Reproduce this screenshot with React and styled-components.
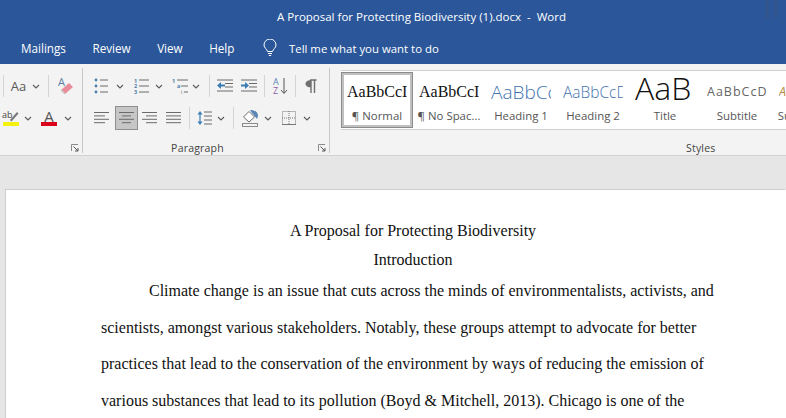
import styled, { createGlobalStyle } from "styled-components";

const GlobalStyle = createGlobalStyle`
  html, body {
    margin: 0;
    height: 100%;
    overflow: hidden;
    background: #e6e6e6;
  }
`;

const Window = styled.div`
  position: relative;
  width: 786px;
  height: 418px;
  overflow: hidden;
  display: flex;
  flex-direction: column;
  font-family: "Open Sans", "Noto Sans", sans-serif;
`;

const Header = styled.header`
  position: relative;
  background: #2b579a;
  color: #fff;
  height: 64px;
  flex: none;
`;

const TitleBar = styled.div`
  height: 32px;
  padding-left: 57px;
  display: flex;
  align-items: center;
  justify-content: center;
  font-size: 11.5px;
  white-space: pre;
`;

const Smudge = styled.div`
  position: absolute;
  top: 0;
  left: 765px;
  width: 18px;
  height: 18px;
  background: repeating-linear-gradient(
    90deg,
    rgba(60, 80, 120, 0.35) 0 4px,
    rgba(43, 87, 154, 0) 4px 9px
  );
`;

const TabBar = styled.nav`
  height: 32px;
  padding-left: 21px;
  display: flex;
  align-items: center;
  gap: 26.5px;
  font-size: 11.7px;
`;

const Tab = styled.span`
  display: block;
`;

const TellMe = styled.div`
  display: flex;
  align-items: center;
  gap: 12px;
  margin-left: 2px;
  font-size: 11.4px;
`;

const Ribbon = styled.section`
  flex: none;
  height: 92px;
  display: flex;
  background: #f3f3f3;
  border-bottom: 1px solid #d2d2d2;
  box-sizing: border-box;
`;

const FontGroup = styled.div`
  width: 83px;
  flex: none;
  display: flex;
  flex-direction: column;
  border-right: 1px solid #c8c8c8;
  margin: 4px 0 2px;
  box-sizing: border-box;
`;

const ParagraphGroup = styled(FontGroup)`
  width: 247px;
`;

const Tools = styled.div`
  flex: 1;
  padding: 6px 0 0 ${(p) => p.$pad || 0}px;
  display: flex;
  flex-direction: column;
  gap: 8px;
`;

const Row = styled.div`
  display: flex;
  height: 24px;
  align-items: stretch;
`;

const Tool = styled.div`
  width: ${(p) => p.$w}px;
  margin-left: ${(p) => p.$gap || 0}px;
  flex: none;
  display: flex;
  align-items: center;
  justify-content: center;
  box-sizing: border-box;
  background: ${(p) => (p.$active ? "#c6c6c6" : "transparent")};
  border: ${(p) => (p.$active ? "1px solid #8f8f8f" : "0")};
`;

const Divider = styled.div`
  width: 1px;
  height: 22px;
  background: #d4d4d4;
`;

const CaseLabel = styled.span`
  font-size: 13px;
  color: #5a5a5a;
`;

const GroupFooter = styled.div`
  height: 10px;
  display: flex;
  align-items: center;
  justify-content: flex-end;
  position: relative;
  padding-right: 3px;
`;

const GroupLabel = styled.span`
  position: absolute;
  left: 0;
  right: 17px;
  text-align: center;
  font-size: 10.5px;
  letter-spacing: 0.2px;
  color: #444;
`;

const StylesGroup = styled.div`
  flex: 1;
  min-width: 0;
  display: flex;
  flex-direction: column;
  padding: 6px 0 0 11px;
`;

const Gallery = styled.div`
  height: 60px;
  box-sizing: border-box;
  display: flex;
  background: #fff;
  border-top: 1px solid #d0d0d0;
  border-bottom: 1px solid #d0d0d0;
  padding-top: 1px;
  overflow: hidden;
`;

const StyleItem = styled.div`
  width: 72px;
  height: 56px;
  flex: none;
  box-sizing: border-box;
  display: flex;
  flex-direction: column;
  align-items: center;
  overflow: hidden;
  background: #fff;
  border: ${(p) => (p.$selected ? "3px solid #c0c0c0" : "3px solid transparent")};
  outline: ${(p) => (p.$selected ? "1px solid #8c8c8c" : "none")};
  outline-offset: -1px;
`;

const sampleStyles = {
  normal: `font: 16px "Liberation Serif", serif; color: #111;`,
  h1: `font: 300 19px "Open Sans", sans-serif; color: #3f74b0;`,
  h2: `font: 300 15.5px "Open Sans", sans-serif; color: #3f74b0;`,
  title: `font: 300 32px/30px "Open Sans", sans-serif; color: #111; padding-bottom: 8px;`,
  subtitle: `font: 12.5px "Open Sans", sans-serif; color: #666; letter-spacing: 1px;`,
  emphasis: `font: italic 12.5px "Open Sans", sans-serif; color: #b08a3c;`,
};

const Sample = styled.div`
  height: 33px;
  width: 60px;
  box-sizing: border-box;
  flex: none;
  display: flex;
  align-items: center;
  justify-content: flex-start;
  overflow: hidden;
  white-space: nowrap;
  ${(p) => sampleStyles[p.$kind]}
`;

const StyleName = styled.div`
  font-size: 11.4px;
  line-height: 16px;
  color: #555;
  white-space: nowrap;
`;

const StylesLabel = styled.div`
  font-size: 10.5px;
  letter-spacing: 0.2px;
  color: #444;
  margin-top: 11px;
  padding-left: 345px;
  white-space: nowrap;
`;

const Workspace = styled.main`
  flex: 1;
  min-height: 0;
  background: #e6e6e6;
  padding: 34px 0 0 6px;
  overflow: hidden;
`;

const Page = styled.article`
  height: 400px;
  background: #fff;
  box-shadow: -1px -1px 0 #cfcfcf;
  padding: 26px 61px 0 95px;
  font-family: "Liberation Serif", serif;
  font-size: 16px;
  color: #111;
`;

const Centered = styled.div`
  text-align: center;
  line-height: 29px;
  white-space: nowrap;
`;

const BodyLine = styled.div`
  line-height: 36.5px;
  white-space: nowrap;
  text-indent: ${(p) => (p.$first ? "48px" : "0")};
  margin-top: ${(p) => (p.$first ? "-1px" : "0")};
`;

const blue = "#4d7ea8";
const grey = "#6b6b6b";

function Chevron() {
  return (
    <svg width="8" height="5" viewBox="0 0 8 5">
      <path d="M1 1l3 3 3-3" fill="none" stroke="#5a5a5a" strokeWidth="1.1" />
    </svg>
  );
}

function Lines({ rows }) {
  return (
    <svg width="16" height="16" viewBox="0 0 16 16">
      {rows.map(([x1, x2], i) => (
        <path key={i} d={`M${x1} ${2.5 + i * 3.4}H${x2}`} stroke={grey} strokeWidth="1" />
      ))}
    </svg>
  );
}

function Eraser() {
  return (
    <svg width="16" height="18" viewBox="0 0 16 18">
      <text x="0" y="9" fontSize="11" fontFamily="Open Sans" fill="#5a7fa5">A</text>
      <path d="M3 13l8-7 4 4-8 7z" fill="#e88c9c" />
      <path d="M3 13l4 4" stroke="#c9c9c9" strokeWidth="1.5" />
    </svg>
  );
}

function Highlighter() {
  return (
    <svg width="18" height="18" viewBox="0 0 18 18">
      <text x="0" y="9" fontSize="9" fontFamily="Open Sans" fill="#444">ab</text>
      <path d="M8 11l7-8 1.5 1.5-7 8z" fill="#777" />
      <rect x="1" y="13" width="16" height="4" fill="#f5f10e" />
    </svg>
  );
}

function FontColor() {
  return (
    <svg width="16" height="18" viewBox="0 0 16 18">
      <text x="8" y="13" textAnchor="middle" fontSize="15" fontFamily="Open Sans" fill="#555">A</text>
      <rect x="0" y="13" width="16" height="4" fill="#d9021a" />
    </svg>
  );
}

function Bullets() {
  return (
    <svg width="15" height="16" viewBox="0 0 15 16">
      {[2, 8, 14].map((y) => (
        <g key={y}>
          <circle cx="2" cy={y} r="1.4" fill={blue} />
          <path d={`M6 ${y}H14`} stroke={grey} />
        </g>
      ))}
    </svg>
  );
}

function Numbered() {
  return (
    <svg width="15" height="16" viewBox="0 0 15 16">
      {[1, 2, 3].map((n) => (
        <g key={n}>
          <text x="0" y={n * 5.2} fontSize="5.5" fontFamily="Open Sans" fontWeight="700" fill={blue}>{n}</text>
          <path d={`M5 ${n * 6 - 4}H15`} stroke={grey} />
        </g>
      ))}
    </svg>
  );
}

function Multilevel() {
  return (
    <svg width="17" height="16" viewBox="0 0 17 16">
      <text x="0" y="5" fontSize="5.5" fontFamily="Open Sans" fontWeight="700" fill={blue}>1</text>
      <path d="M5 2H16" stroke={grey} />
      <text x="5" y="10" fontSize="5.5" fontFamily="Open Sans" fontWeight="700" fill={blue}>a</text>
      <path d="M9 8H16" stroke={grey} />
      <text x="9" y="16" fontSize="5.5" fontFamily="Open Sans" fill={grey}>i</text>
      <path d="M12 14H16" stroke={grey} />
    </svg>
  );
}

function Indent({ flip }) {
  return (
    <svg width="17" height="14" viewBox="0 0 17 14">
      <path d="M0 1H16M8 4.5H16M8 8H16M0 12H16" stroke={grey} />
      <path
        d={flip ? "M0 5.5H4V3l4 3.5L4 10V7.5H0z" : "M8 5.5H4V3L0 6.5 4 10V7.5H8z"}
        fill="#3a7cb4"
      />
    </svg>
  );
}

function Sort() {
  return (
    <svg width="15" height="18" viewBox="0 0 15 18">
      <text x="0" y="8" fontSize="9" fontFamily="Open Sans" fill="#5b87b5">A</text>
      <text x="0" y="17" fontSize="9" fontFamily="Open Sans" fill="#8a5fa8">Z</text>
      <path d="M11 1V16M8 13l3 3.5 3-3.5" fill="none" stroke="#555" />
    </svg>
  );
}

function Pilcrow() {
  return (
    <svg width="12" height="15" viewBox="0 0 12 15">
      <path d="M5 1h6.5M6 1v13M9.5 1v13" stroke="#6f6f6f" strokeWidth="1.4" fill="none" />
      <path d="M6 1.2C2 1 .5 3 .5 4.8S2 8.5 6 8.3z" fill="#6f6f6f" />
    </svg>
  );
}

function LineSpacing() {
  return (
    <svg width="15" height="16" viewBox="0 0 15 16">
      <path d="M7 2H15M7 6H15M7 10H15M7 14H15" stroke={grey} />
      <path d="M3 1L.5 4.5h5zM3 15L.5 11.5h5z" fill="#3a7cb4" />
      <path d="M3 4V12" stroke="#3a7cb4" strokeWidth="1.2" />
    </svg>
  );
}

function Shading() {
  return (
    <svg width="17" height="18" viewBox="0 0 17 18">
      <path d="M1.5 8L7 2.5 12.5 8 7 13z" fill="#fff" stroke="#6b6b6b" />
      <path d="M8 1c5 0 8 2 8 6l-1 3-2.5-3L10 4z" fill="#5b87b5" />
      <rect x="0.5" y="14.5" width="15" height="3" fill="#f3f3f3" stroke="#8b8b8b" />
    </svg>
  );
}

function Borders() {
  return (
    <svg width="14" height="14" viewBox="0 0 14 14">
      <rect x="0.5" y="0.5" width="13" height="13" fill="none" stroke="#777" strokeDasharray="1 1" />
      <path d="M7 0V14M0 7H14" stroke="#777" strokeDasharray="1 1" />
      <path d="M0 13.5H14" stroke="#777" />
    </svg>
  );
}

function Launcher() {
  return (
    <svg width="8" height="8" viewBox="0 0 8 8">
      <path d="M.5 7V.5H7" fill="none" stroke="#8a8a8a" />
      <path d="M2.5 2.5L7 7M7 4v3H4" fill="none" stroke="#555" />
    </svg>
  );
}

function Bulb() {
  return (
    <svg width="14" height="18" viewBox="0 0 14 18">
      <path
        d="M4.5 12.5C4 10 1 9 1 6a6 6 0 0 1 12 0c0 3-3 4-3.5 6.5z"
        fill="none"
        stroke="#fff"
        strokeWidth="1"
      />
      <path d="M5 14.5H9M5.8 16.5H8.2" stroke="#fff" />
    </svg>
  );
}

const tabs = ["Mailings", "Review", "View", "Help"];

const fontRowOne = [
  { kind: "divider", w: 7 },
  { node: <CaseLabel>Aa</CaseLabel>, w: 23 },
  { node: <Chevron />, w: 11 },
  { kind: "divider", w: 14 },
  { node: <Eraser />, w: 21 },
];

const fontRowTwo = [
  { node: <Highlighter />, w: 21 },
  { node: <Chevron />, w: 14 },
  { node: <FontColor />, w: 28 },
  { node: <Chevron />, w: 9 },
];

const paragraphRowOne = [
  { node: <Bullets />, w: 21 },
  { node: <Chevron />, w: 16 },
  { node: <Numbered />, w: 26 },
  { node: <Chevron />, w: 10 },
  { node: <Multilevel />, w: 24, gap: 4 },
  { node: <Chevron />, w: 8 },
  { kind: "divider", w: 18 },
  { node: <Indent />, w: 24, gap: -5 },
  { node: <Indent flip />, w: 24 },
  { kind: "divider", w: 6 },
  { node: <Sort />, w: 26 },
  { kind: "divider", w: 4 },
  { node: <Pilcrow />, w: 27 },
];

const paragraphRowTwo = [
  { node: <Lines rows={[[0, 15], [0, 11], [0, 15], [0, 11]]} />, w: 22 },
  { node: <Lines rows={[[0, 15], [3, 12], [0, 15], [3, 12]]} />, w: 23, gap: 2, active: true },
  { node: <Lines rows={[[0, 15], [4, 15], [0, 15], [4, 15]]} />, w: 24 },
  { node: <Lines rows={[[0, 15], [0, 15], [0, 15], [0, 15]]} />, w: 24 },
  { kind: "divider", w: 6 },
  { node: <LineSpacing />, w: 25 },
  { node: <Chevron />, w: 8 },
  { kind: "divider", w: 16 },
  { node: <Shading />, w: 18 },
  { node: <Chevron />, w: 18 },
  { node: <Borders />, w: 24 },
  { node: <Chevron />, w: 12 },
];

const styleItems = [
  { name: "¶ Normal", sample: "AaBbCcI", kind: "normal", selected: true },
  { name: "¶ No Spac...", sample: "AaBbCcI", kind: "normal" },
  { name: "Heading 1", sample: "AaBbCcI", kind: "h1" },
  { name: "Heading 2", sample: "AaBbCcD", kind: "h2" },
  { name: "Title", sample: "AaB", kind: "title" },
  { name: "Subtitle", sample: "AaBbCcD", kind: "subtitle" },
  { name: "Subtle Em...", sample: "AaBbCcD", kind: "emphasis" },
];

const bodyLines = [
  "Climate change is an issue that cuts across the minds of environmentalists, activists, and",
  "scientists, amongst various stakeholders. Notably, these groups attempt to advocate for better",
  "practices that lead to the conservation of the environment by ways of reducing the emission of",
  "various substances that lead to its pollution (Boyd & Mitchell, 2013). Chicago is one of the",
];

function ToolRow({ items }) {
  return (
    <Row>
      {items.map((item, index) =>
        item.kind === "divider" ? (
          <Tool key={index} $w={item.w} $gap={item.gap}>
            <Divider />
          </Tool>
        ) : (
          <Tool key={index} $w={item.w} $gap={item.gap} $active={item.active}>
            {item.node}
          </Tool>
        )
      )}
    </Row>
  );
}

export default function App() {
  return (
    <Window>
      <GlobalStyle />
      <Header>
        <TitleBar>A Proposal for Protecting Biodiversity (1).docx &nbsp;-&nbsp; Word</TitleBar>
        <Smudge />
        <TabBar>
          {tabs.map((tab) => (
            <Tab key={tab}>{tab}</Tab>
          ))}
          <TellMe>
            <Bulb />
            <span>Tell me what you want to do</span>
          </TellMe>
        </TabBar>
      </Header>

      <Ribbon>
        <FontGroup>
          <Tools>
            <ToolRow items={fontRowOne} />
            <ToolRow items={fontRowTwo} />
          </Tools>
          <GroupFooter>
            <Launcher />
          </GroupFooter>
        </FontGroup>

        <ParagraphGroup>
          <Tools $pad={8}>
            <ToolRow items={paragraphRowOne} />
            <ToolRow items={paragraphRowTwo} />
          </Tools>
          <GroupFooter>
            <GroupLabel>Paragraph</GroupLabel>
            <Launcher />
          </GroupFooter>
        </ParagraphGroup>

        <StylesGroup>
          <Gallery>
            {styleItems.map((item) => (
              <StyleItem key={item.name} $selected={item.selected}>
                <Sample $kind={item.kind}>{item.sample}</Sample>
                <StyleName>{item.name}</StyleName>
              </StyleItem>
            ))}
          </Gallery>
          <StylesLabel>Styles</StylesLabel>
        </StylesGroup>
      </Ribbon>

      <Workspace>
        <Page>
          <Centered>A Proposal for Protecting Biodiversity</Centered>
          <Centered>Introduction</Centered>
          {bodyLines.map((line, index) => (
            <BodyLine key={index} $first={index === 0}>
              {line}
            </BodyLine>
          ))}
        </Page>
      </Workspace>
    </Window>
  );
}
